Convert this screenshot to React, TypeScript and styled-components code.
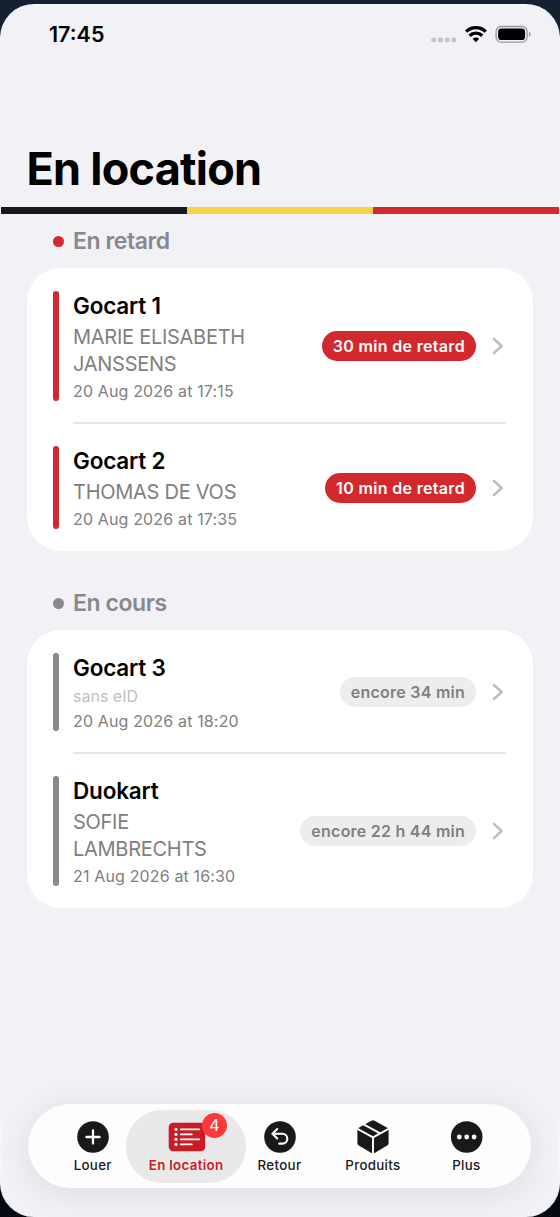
import React from "react";
import styled, { createGlobalStyle, css } from "styled-components";

const GlobalStyle = createGlobalStyle`
  *, *::before, *::after { box-sizing: border-box; }
  body { margin: 0; background: linear-gradient(#162033, #040811); }
`;

const Stage = styled.div`
  width: 560px;
  height: 1217px;
  padding: 4px 0 0;
  overflow: hidden;
  background: linear-gradient(#162033, #040811);
  font-family: Inter, "Liberation Sans", sans-serif;
`;

const Phone = styled.main`
  display: flex;
  flex-direction: column;
  height: 1213px;
  border: 0 solid #f6f6fa;
  border-width: 0 1px;
  border-radius: 34px;
  overflow: hidden;
  background: #f1f1f6;
`;

const StatusBar = styled.header`
  display: flex;
  align-items: center;
  justify-content: space-between;
  height: 62px;
  padding: 0 27px 0 48px;
`;

const Clock = styled.time`
  margin-top: -2px;
  font-size: 21.5px;
  font-weight: 600;
  letter-spacing: 0;
`;

const Title = styled.h1`
  margin: 76px 0 0 25.5px;
  height: 65px;
  font-size: 45px;
  line-height: 54px;
  font-weight: 700;
  letter-spacing: -0.75px;
`;

const Stripe = styled.div`
  display: grid;
  grid-template-columns: repeat(3, 1fr);
  height: 6.5px;
`;

const Band = styled.span<{ $color: string }>`
  background: ${(p) => p.$color};
`;

const Section = styled.section`
  padding: 0 26px;
`;

const SectionTitle = styled.h2<{ $first?: boolean }>`
  display: flex;
  align-items: center;
  gap: 9px;
  margin: 0;
  padding-left: 26px;
  height: ${(p) => (p.$first ? 54.5 : 79)}px;
  padding-top: ${(p) => (p.$first ? 1 : 25)}px;
  color: #89898d;
  font-size: 23px;
  font-weight: 600;
  letter-spacing: -0.42px;
`;

const Dot = styled.span<{ $color: string }>`
  width: 11px;
  height: 11px;
  border-radius: 50%;
  background: ${(p) => p.$color};
`;

const Card = styled.div`
  padding: 0 27px 0 26px;
  border-radius: 34px;
  background: #fff;
`;

const Row = styled.article`
  display: flex;
  align-items: center;
  padding: 23px 0 22px;
  position: relative;

  & + &::before {
    content: "";
    position: absolute;
    top: -1px;
    left: 20px;
    right: 0;
    height: 1.5px;
    background: #e6e6e7;
  }
`;

const Marker = styled.span<{ $color: string }>`
  align-self: stretch;
  width: 6px;
  margin-right: 14px;
  border-radius: 3px;
  background: ${(p) => p.$color};
`;

const Details = styled.div`
  flex: 1;
  display: flex;
  flex-direction: column;
  gap: 3.5px;
  color: #808080;
`;

const Vehicle = styled.h3`
  margin: 0;
  color: #000;
  font-size: 22.5px;
  line-height: 29px;
  font-weight: 600;
  letter-spacing: -0.18px;
`;

const Customer = styled.div<{ $missing?: boolean }>`
  font-size: 20px;
  line-height: 27px;
  letter-spacing: -0.27px;
  white-space: pre-line;
  ${(p) =>
    p.$missing &&
    css`
      padding-bottom: 2px;
      color: #bfbfbf;
      font-size: 16px;
      line-height: 20px;
      letter-spacing: 0;
    `}
`;

const Due = styled.div`
  font-size: 16px;
  line-height: 20px;
  letter-spacing: 0.15px;
`;

const Pill = styled.span<{ $late: boolean }>`
  height: 30px;
  padding: 0 11px;
  border-radius: 15px;
  background: ${(p) => (p.$late ? "#d4282f" : "#ededed")};
  color: ${(p) => (p.$late ? "#fff" : "#808080")};
  font-size: 16px;
  line-height: 30px;
  font-weight: 600;
  letter-spacing: ${(p) => (p.$late ? 0.33 : 0.24)}px;
  white-space: nowrap;
`;

const Chevron = styled.svg`
  width: 12px;
  height: 18px;
  margin: 0 2px 0 16px;
`;

const TabBar = styled.nav`
  display: flex;
  margin: auto 28px 29px 27px;
  height: 84px;
  padding: 0 18px;
  border-radius: 42px;
  background: #fdfdfe;
  box-shadow: 0 5px 36px rgba(0, 0, 0, 0.09);
`;

const Tab = styled.a<{ $active?: boolean }>`
  position: relative;
  z-index: 0;
  flex: 1;
  display: flex;
  flex-direction: column;
  align-items: center;
  padding-top: 16px;
  color: ${(p) => (p.$active ? "#c91c25" : "#19191b")};
  ${(p) =>
    p.$active &&
    css`
      &::before {
        content: "";
        position: absolute;
        z-index: -1;
        inset: 6px -13px 5.5px;
        border-radius: 36px;
        background: #e9e9ea;
      }
    `}
`;

const TabIcon = styled.svg`
  height: 34px;
  margin-left: 1px;
  display: block;
  overflow: visible;
`;

const TabLabel = styled.span<{ $active?: boolean }>`
  margin-top: 3px;
  font-size: 13.3px;
  line-height: 17px;
  font-weight: ${(p) => (p.$active ? 600 : 500)};
  letter-spacing: 0.33px;
  white-space: nowrap;
`;

const Badge = styled.span`
  position: absolute;
  top: 9px;
  left: 62.5px;
  width: 25px;
  height: 25px;
  border-radius: 50%;
  background: #ff383c;
  color: #fff;
  font-size: 16px;
  line-height: 25px;
  text-align: center;
`;

const StatusIcons = () => (
  <svg width="102" height="24" viewBox="430 23 102 24">
    <g fill="#c5c5ca">
      {[431.3, 438, 444.8, 451.5].map((x) => (
        <rect key={x} x={x} y="37.5" width="4.7" height="4.7" rx="1.5" />
      ))}
    </g>
    <g fill="none" stroke="#000" strokeWidth="3.3">
      <path d="M466.1 31.6a14 14 0 0 1 19.6 0" />
      <path d="M469.6 35.7a9 9 0 0 1 12.6 0" />
    </g>
    <path d="M475.9 42.2l-3.3-3.4a4.6 4.6 0 0 1 6.6 0z" />
    <rect x="496.1" y="26.5" width="31" height="15.6" rx="5" fill="none" stroke="#98989c" strokeWidth="1.3" />
    <rect x="498.1" y="28.5" width="27" height="11.6" rx="3.4" />
    <path d="M529 31.8c2.2.7 2.2 4.3 0 5z" fill="#98989c" />
  </svg>
);

const PlusIcon = () => (
  <TabIcon width="34" viewBox="0 0 34 34">
    <circle cx="17" cy="17" r="15.8" fill="currentColor" />
    <path d="M17 10.4v13.2M10.4 17h13.2" stroke="#fff" strokeWidth="2.3" strokeLinecap="round" />
  </TabIcon>
);

const ListIcon = () => (
  <TabIcon width="38" viewBox="0 0 38 34">
    <rect x="0.7" y="2.7" width="36.5" height="28.6" rx="4.5" fill="currentColor" />
    <g stroke="#fff" strokeWidth="1.8" strokeLinecap="round">
      <path d="M12.8 9.4h18.5M12.8 14.3h11M12.8 19.3h18.5M12.8 24.3h11" />
    </g>
    <g fill="#fff">
      {[9.4, 14.3, 19.3, 24.3].map((y) => (
        <circle key={y} cx="8" cy={y} r="1.6" />
      ))}
    </g>
  </TabIcon>
);

const ReturnIcon = () => (
  <TabIcon width="34" viewBox="0 0 34 34">
    <circle cx="17" cy="17" r="15.8" fill="currentColor" />
    <path
      d="M14.2 9l-4.8 4.8 4.8 4.8M9.8 13.8h9.6a4.9 4.9 0 0 1 0 9.8h-3.2"
      fill="none"
      stroke="#fff"
      strokeWidth="2.1"
      strokeLinecap="round"
      strokeLinejoin="round"
    />
  </TabIcon>
);

const BoxIcon = () => (
  <TabIcon width="34" viewBox="0 0 34 34">
    <path
      d="M15.4 .7q1.6-.8 3.2 0l12.6 7.1q1.4.9 1.4 2.3v13.2q0 1.5-1.4 2.3l-12.6 7.4q-1.6.8-3.2 0l-12.6-7.4q-1.4-.8-1.4-2.3v-13.2q0-1.4 1.4-2.3z"
      fill="currentColor"
    />
    <path d="M.6 8.3L17 17.3l16.4-9M17 17.3v16.7M7.6 4.3l17 9.4" fill="none" stroke="#fdfdfe" strokeWidth="1.9" />
  </TabIcon>
);

const MoreIcon = () => (
  <TabIcon width="34" viewBox="0 0 34 34">
    <circle cx="16.7" cy="17" r="15.8" fill="currentColor" />
    <g fill="#fff">
      {[9.3, 16.7, 24.1].map((x) => (
        <circle key={x} cx={x} cy="17" r="2.4" />
      ))}
    </g>
  </TabIcon>
);

type Rental = { vehicle: string; customer?: string; due: string; status: string };

const late: Rental[] = [
  { vehicle: "Gocart 1", customer: "MARIE ELISABETH\nJANSSENS", due: "20 Aug 2026 at 17:15", status: "30 min de retard" },
  { vehicle: "Gocart 2", customer: "THOMAS DE VOS", due: "20 Aug 2026 at 17:35", status: "10 min de retard" },
];

const ongoing: Rental[] = [
  { vehicle: "Gocart 3", due: "20 Aug 2026 at 18:20", status: "encore 34 min" },
  { vehicle: "Duokart", customer: "SOFIE\nLAMBRECHTS", due: "21 Aug 2026 at 16:30", status: "encore 22 h 44 min" },
];

const tabs = [
  { label: "Louer", Icon: PlusIcon },
  { label: "En location", Icon: ListIcon, badge: 4 },
  { label: "Retour", Icon: ReturnIcon },
  { label: "Produits", Icon: BoxIcon },
  { label: "Plus", Icon: MoreIcon },
];

const RentalCard = ({ rentals, isLate = false }: { rentals: Rental[]; isLate?: boolean }) => (
  <Card>
    {rentals.map((r) => (
      <Row key={r.vehicle}>
        <Marker $color={isLate ? "#d4282f" : "#88888a"} />
        <Details>
          <Vehicle>{r.vehicle}</Vehicle>
          <Customer $missing={!r.customer}>{r.customer ?? "sans eID"}</Customer>
          <Due>{r.due}</Due>
        </Details>
        <Pill $late={isLate}>{r.status}</Pill>
        <Chevron viewBox="0 0 12 18">
          <path d="M2 2l7.6 7L2 16" fill="none" stroke="#bfbfc1" strokeWidth="2.6" strokeLinecap="round" strokeLinejoin="round" />
        </Chevron>
      </Row>
    ))}
  </Card>
);

export default function App() {
  return (
    <Stage>
      <GlobalStyle />
      <Phone>
        <StatusBar>
          <Clock>17:45</Clock>
          <StatusIcons />
        </StatusBar>
        <Title>En location</Title>
        <Stripe>
          <Band $color="#16191c" />
          <Band $color="#f4d444" />
          <Band $color="#d4282f" />
        </Stripe>
        <Section>
          <SectionTitle $first>
            <Dot $color="#d4282f" />
            En retard
          </SectionTitle>
          <RentalCard rentals={late} isLate />
        </Section>
        <Section>
          <SectionTitle>
            <Dot $color="#89898d" />
            En cours
          </SectionTitle>
          <RentalCard rentals={ongoing} />
        </Section>
        <TabBar>
          {tabs.map(({ label, Icon, badge }) => (
            <Tab key={label} $active={!!badge}>
              <Icon />
              <TabLabel $active={!!badge}>{label}</TabLabel>
              {badge && <Badge>{badge}</Badge>}
            </Tab>
          ))}
        </TabBar>
      </Phone>
    </Stage>
  );
}
